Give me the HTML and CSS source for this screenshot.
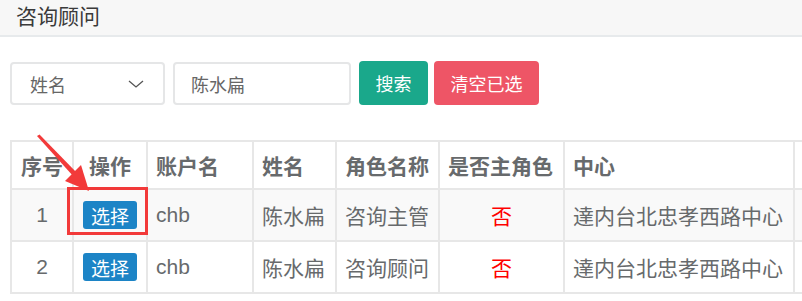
FILE: index.html
```html
<!DOCTYPE html>
<html lang="zh-CN">
<head>
  <meta charset="UTF-8" />
  <meta name="viewport" content="width=device-width, initial-scale=1" />
  <title>咨询顾问</title>
  <link rel="stylesheet" href="styles.css">
</head>
<body>

  <div class="page-head">
    <h1>咨询顾问</h1>
  </div>

  <div class="search-box">
    <div class="select">
      <span>姓名</span>
      <svg class="chevron" width="16" height="8" viewBox="0 0 16 8">
        <path d="M1 1 L8 7 L15 1" fill="none" stroke="#555" stroke-width="1.3" />
      </svg>
    </div>
    <div class="text-input">陈水扁</div>
    <button class="btn btn-search">搜索</button>
    <button class="btn btn-clear">清空已选</button>
  </div>

  <table class="list">
    <colgroup>
      <col style="width:62px">
      <col style="width:74px">
      <col style="width:106px">
      <col style="width:83px">
      <col style="width:103px">
      <col style="width:125px">
      <col style="width:230px">
      <col style="width:120px">
    </colgroup>
    <thead>
      <tr>
        <th class="center">序号</th>
        <th class="center">操作</th>
        <th>账户名</th>
        <th>姓名</th>
        <th>角色名称</th>
        <th>是否主角色</th>
        <th>中心</th>
        <th></th>
      </tr>
    </thead>
    <tbody>
      <tr class="odd">
        <td class="center">1</td>
        <td class="center"><button class="pick">选择</button></td>
        <td>chb</td>
        <td>陈水扁</td>
        <td>咨询主管</td>
        <td class="center no">否</td>
        <td>達内台北忠孝西路中心</td>
        <td></td>
      </tr>
      <tr>
        <td class="center">2</td>
        <td class="center"><button class="pick">选择</button></td>
        <td>chb</td>
        <td>陈水扁</td>
        <td>咨询顾问</td>
        <td class="center no">否</td>
        <td>達内台北忠孝西路中心</td>
        <td></td>
      </tr>
    </tbody>
  </table>

  <!-- annotation on top of the screenshot -->
  <svg class="mark" width="802" height="301" viewBox="0 0 802 301">
    <polygon points="37,136 39.5,134.5 77,173 73.5,176.5" fill="#f23a3a" />
    <polygon points="89,191 65,181 81,165" fill="#f23a3a" />
    <rect x="68.5" y="188.5" width="78" height="45" fill="none" stroke="#f23a3a" stroke-width="3" />
  </svg>

</body>
</html>
```

FILE: styles.css
```css
body {
  font-family: "Liberation Sans", "Noto Sans CJK SC", sans-serif;
  margin: 0;
  background: #fff;
  color: #676a6c;
  width: 802px;
  height: 301px;
  overflow: hidden;
  position: relative;
}

.page-head {
  background: #f7f7f7;
  border-bottom: 2px solid #e7eaec;
  height: 35px;
  padding-left: 16px;
}

.page-head h1 {
  margin: 0;
  font-size: 21px;
  font-weight: normal;
  line-height: 33px;
  color: #3a3a3a;
}

.search-box {
  display: flex;
  margin: 25px 0 0 10px;
  height: 43px;
}

.select, .text-input {
  box-sizing: border-box;
  height: 43px;
  border: 2px solid #e5e6e7;
  border-radius: 4px;
  font-size: 18px;
  color: #666;
  display: flex;
  align-items: center;
}

.select {
  width: 155px;
  padding: 0 19px 0 18px;
  justify-content: space-between;
}

.text-input {
  width: 178px;
  margin-left: 8px;
  padding-left: 16px;
}

.btn {
  height: 44px;
  margin-top: -1px;
  border: none;
  border-radius: 4px;
  color: #fff;
  font-family: inherit;
  font-size: 18px;
  padding: 0;
}

.btn-search {
  width: 69px;
  margin-left: 8px;
  background: #1aa88b;
}

.btn-clear {
  width: 105px;
  margin-left: 6px;
  background: #ee5566;
}

.list {
  margin: 35px 0 0 10px;
  border-collapse: collapse;
  table-layout: fixed;
  width: 903px;
  font-size: 21px;
}

.list th, .list td {
  border: 2px solid #e7e7e7;
  padding: 0 8px;
  text-align: left;
  white-space: nowrap;
  overflow: hidden;
}

.list th {
  height: 46px;
  font-weight: bold;
}

.list td {
  height: 50px;
}

.list .center {
  text-align: center;
}

.list tr.odd td {
  background: #f9f9f9;
}

.no {
  color: #f00;
}

.pick {
  background: #1c84c6;
  color: #fff;
  border: none;
  border-radius: 3px;
  width: 54px;
  height: 28px;
  padding: 0;
  font-family: inherit;
  font-size: 19px;
  vertical-align: middle;
}

.mark {
  position: absolute;
  left: 0;
  top: 0;
  pointer-events: none;
}
```
